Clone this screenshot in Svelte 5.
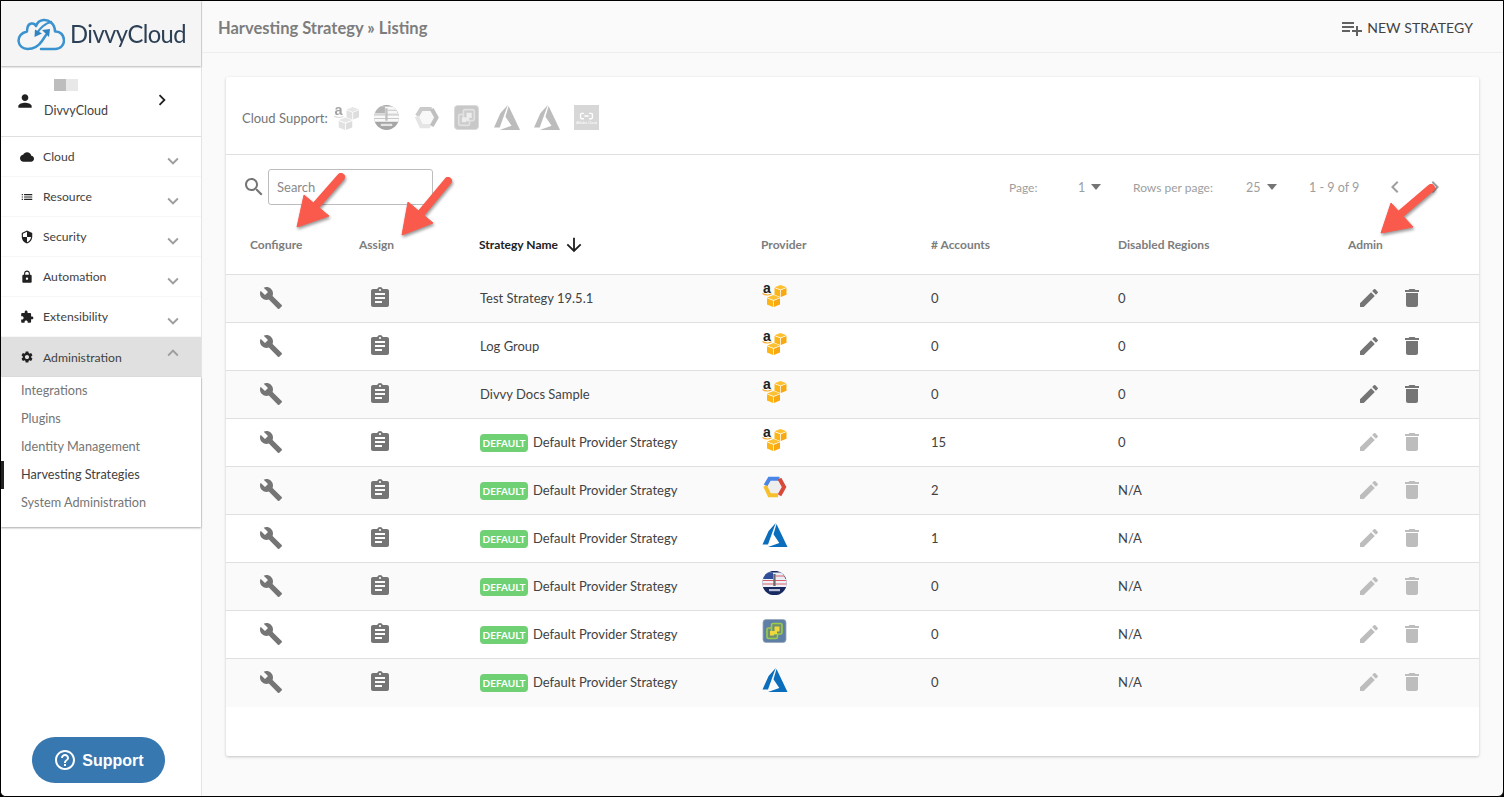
<script>
  const nav = [
    { label: 'Cloud', icon: 'M19.35 10.04C18.67 6.59 15.64 4 12 4 9.11 4 6.6 5.64 5.35 8.04 2.34 8.36 0 10.91 0 14c0 3.31 2.69 6 6 6h13c2.76 0 5-2.24 5-5 0-2.64-2.05-4.78-4.65-4.96z' },
    { label: 'Resource', icon: 'M3 13h2v-2H3v2zm0 4h2v-2H3v2zm0-8h2V7H3v2zm4 4h14v-2H7v2zm0 4h14v-2H7v2zM7 7v2h14V7H7z' },
    { label: 'Security', icon: 'M12 1L3 5v6c0 5.55 3.84 10.74 9 12 5.16-1.26 9-6.45 9-12V5l-9-4zm0 10.99h7c-.53 4.12-3.28 7.79-7 8.94V12H5V6.3l7-3.11v8.8z' },
    { label: 'Automation', icon: 'M18 8h-1V6c0-2.76-2.24-5-5-5S7 3.24 7 6v2H6c-1.1 0-2 .9-2 2v10c0 1.1.9 2 2 2h12c1.1 0 2-.9 2-2V10c0-1.1-.9-2-2-2zm-6 9c-1.1 0-2-.9-2-2s.9-2 2-2 2 .9 2 2-.9 2-2 2zm3.1-9H8.9V6c0-1.71 1.39-3.1 3.1-3.1 1.71 0 3.1 1.39 3.1 3.1v2z' },
    { label: 'Extensibility', icon: 'M20.5 11H19V7c0-1.1-.9-2-2-2h-4V3.5C13 2.12 11.88 1 10.5 1S8 2.12 8 3.5V5H4c-1.1 0-1.99.9-1.99 2v3.8H3.5c1.49 0 2.7 1.21 2.7 2.7s-1.21 2.7-2.7 2.7H2V20c0 1.1.9 2 2 2h3.8v-1.5c0-1.49 1.21-2.7 2.7-2.7 1.49 0 2.7 1.21 2.7 2.7V22H17c1.1 0 2-.9 2-2v-4h1.5c1.38 0 2.5-1.12 2.5-2.5S21.88 11 20.5 11z' },
  ];
  const settings = 'M19.14 12.94c.04-.3.06-.61.06-.94 0-.32-.02-.64-.07-.94l2.03-1.58c.18-.14.23-.41.12-.61l-1.92-3.32c-.12-.22-.37-.29-.59-.22l-2.39.96c-.5-.38-1.03-.7-1.62-.94l-.36-2.54c-.04-.24-.24-.41-.48-.41h-3.84c-.24 0-.43.17-.47.41l-.36 2.54c-.59.24-1.13.57-1.62.94l-2.39-.96c-.22-.08-.47 0-.59.22L2.74 8.87c-.12.21-.08.47.12.61l2.03 1.58c-.05.3-.09.63-.09.94s.02.64.07.94l-2.03 1.58c-.18.14-.23.41-.12.61l1.92 3.32c.12.22.37.29.59.22l2.39-.96c.5.38 1.03.7 1.62.94l.36 2.54c.05.24.24.41.48.41h3.84c.24 0 .44-.17.47-.41l.36-2.54c.59-.24 1.13-.56 1.62-.94l2.39.96c.22.08.47 0 .59-.22l1.92-3.32c.12-.22.07-.47-.12-.61l-2.01-1.58zM12 15.6c-1.98 0-3.6-1.62-3.6-3.6s1.62-3.6 3.6-3.6 3.6 1.62 3.6 3.6-1.62 3.6-3.6 3.6z';
  const subs = ['Integrations', 'Plugins', 'Identity Management', 'Harvesting Strategies', 'System Administration'];
  const cols = ['Configure', 'Assign', 'Strategy Name', 'Provider', '# Accounts', 'Disabled Regions', 'Admin'];
  const rows = [
    { name: 'Test Strategy 19.5.1', p: 'aws', acc: '0', dis: '0' },
    { name: 'Log Group', p: 'aws', acc: '0', dis: '0' },
    { name: 'Divvy Docs Sample', p: 'aws', acc: '0', dis: '0' },
    { name: 'Default Provider Strategy', d: true, p: 'aws', acc: '15', dis: '0' },
    { name: 'Default Provider Strategy', d: true, p: 'gcp', acc: '2', dis: 'N/A' },
    { name: 'Default Provider Strategy', d: true, p: 'azure', acc: '1', dis: 'N/A' },
    { name: 'Default Provider Strategy', d: true, p: 'gov', acc: '0', dis: 'N/A' },
    { name: 'Default Provider Strategy', d: true, p: 'vmw', acc: '0', dis: 'N/A' },
    { name: 'Default Provider Strategy', d: true, p: 'azure', acc: '0', dis: 'N/A' },
  ];
  const support = ['aws', 'gov', 'gcp', 'vmw', 'azure', 'azure', 'ali'];
  const arrows = [
    { tip: '297,227 304,195 329,216', line: [341, 177, 312, 210] },
    { tip: '402,235 408,202 433,223', line: [448, 181, 418, 217] },
    { tip: '1381,233 1391,203 1413,227', line: [1431, 188, 1397, 217] },
  ];
</script>

{#snippet mi(d, cls)}
  <svg class={cls} viewBox="0 0 24 24" aria-hidden="true"><path {d} /></svg>
{/snippet}

{#snippet logo(p)}
  {#if p === 'aws'}
    <svg class="prov" viewBox="0 0 24 24" aria-hidden="true">
      <text x="0.500" y="9.500" class="awsa">a</text>
      <path d="M0 10.500q4.500 2.800 9 .2" fill="none" stroke="#f5a623" stroke-width="1.100" />
      <path d="M12 4.300 18 2 24 4.300 18 6.600z" fill="#fdc02f" />
      <path d="M12 5 17.600 7.300V14L12 11.700z" fill="#fdb515" />
      <path d="M24 5 18.400 7.300V14L24 11.700z" fill="#f9a90f" />
      <path d="M4.500 14.500 11 12 17.500 14.500 11 17z" fill="#fdc02f" />
      <path d="M4.500 15.300 10.600 17.800V24L4.500 21.500z" fill="#fdb515" />
      <path d="M17.500 15.300 11.400 17.800V24L17.500 21.500z" fill="#f9a90f" />
    </svg>
  {:else if p === 'gcp'}
    <svg class="prov" viewBox="0 0 24 24" aria-hidden="true">
      <path d="M7 3h10l5 9-5 9H7l-5-9z" fill="#eeeeee" />
      <path d="M3 10.500 7 3.800h10" fill="none" stroke="#4a86e8" stroke-width="4" />
      <path d="M2.600 11 7 20.200h8.500" fill="none" stroke="#f6c02c" stroke-width="4" />
      <path d="M17 3.800 21.600 12 17 20.200" fill="none" stroke="#d9493a" stroke-width="4" />
    </svg>
  {:else if p === 'azure'}
    <svg class="prov" viewBox="0 0 24 24" aria-hidden="true">
      <path fill="#0a6ebd" d="M5.483 24H25L14.025 1l-3.038 10.300 5.836 8.700L5.483 24zM13.230 0 6.105 8 0 21.500h5.505z" />
    </svg>
  {:else if p === 'gov'}
    <svg class="prov round" viewBox="0 0 24 24" aria-hidden="true">
      <rect width="24" height="24" fill="#18295f" />
      <path d="M0 8h24v8H0z" fill="#eef1f7" />
      <path d="M4 1.500h16l3 6.500H1z" fill="#e9edf5" />
      <path d="M13 5h10M0 9.500h24M0 13h24" stroke="#d9606a" stroke-width="1.100" />
      <path d="M3 1.500h7.500V8H1z" fill="#2f4d99" />
      <path d="M10.800 3h2.300v12h-2.300z" fill="#6a6a6a" />
      <rect x="6.500" y="18" width="11" height="2.200" fill="#b8c0d6" />
    </svg>
  {:else if p === 'vmw'}
    <svg class="prov" viewBox="0 0 24 24" aria-hidden="true">
      <rect x=".5" y=".5" width="23" height="23" rx="3" fill="#5f7fa6" stroke="#9aa7b8" stroke-width=".8" />
      <rect x="4.500" y="9" width="10.500" height="10.500" rx="1.500" fill="#6f8f70" stroke="#9ccb4c" stroke-width="1.600" />
      <rect x="9" y="4.500" width="10.500" height="10.500" rx="1.500" fill="#6f8f70" stroke="#9ccb4c" stroke-width="1.600" />
      <path d="M12 7.500h5v5h-2.500V15H9v-3h3z" fill="#f1d83c" />
      <rect x="7.500" y="12" width="4" height="4.500" fill="#f1d83c" />
    </svg>
  {:else}
    <svg class="prov" viewBox="0 0 24 24" aria-hidden="true">
      <rect width="24" height="24" fill="#a0a0a0" />
      <path d="M9.500 8H7.500a1.200 1.200 0 0 0-1.200 1.200V12a1.200 1.200 0 0 0 1.200 1.200h2M14.500 8h2a1.200 1.200 0 0 1 1.200 1.200V12a1.200 1.200 0 0 1-1.200 1.200h-2M10 10.600h4" fill="none" stroke="#fff" stroke-width="1.300" />
      <text x="12" y="18.500" class="alit">Alibaba Cloud</text>
    </svg>
  {/if}
{/snippet}

<div class="frame">
  <aside class="side">
    <div class="brand">
      <svg class="cloudmark" viewBox="0 0 48 36" aria-hidden="true">
        <path d="M24 33H38C44 33 47 28.500 47 24.500 47 19 43 15 38 15.500 38 8 32 3.500 26.500 4 22.500 4.500 20 7 19 10 17 6 11.500 7 10.500 11.500 10 14 10 15 10 15.500 4 17 1.500 21 1.500 25 2 30 6 33 10.500 33 18 33 23 28 25 25L29 19" fill="none" stroke="#3a92cf" stroke-width="2.500" stroke-linecap="round" stroke-linejoin="round" />
        <path d="M34 6C28 7.500 24 11 20 17" fill="none" stroke="#3a92cf" stroke-width="2.300" stroke-linecap="round" />
        <path d="M25 14 33 13 32 21z" fill="#2f83c0" />
        <path d="M17.500 21 18 13.500 25 17.500z" fill="#2f83c0" />
      </svg>
      <span class="brandname">DivvyCloud</span>
    </div>

    <div class="user">
      {@render mi('M12 12c2.210 0 4-1.790 4-4s-1.790-4-4-4-4 1.790-4 4 1.790 4 4 4zm0 2c-2.670 0-8 1.340-8 4v2h16v-2c0-2.660-5.330-4-8-4z', 'personicon')}
      <div class="userinfo">
        <div class="blur"><i></i><b></b></div>
        <div class="uname">DivvyCloud</div>
      </div>
      {@render mi('M10 6 8.590 7.410 13.170 12l-4.580 4.590L10 18l6-6z', 'userchev')}
    </div>

    <nav>
      {#each nav as n}
        <div class="nitem">
          {@render mi(n.icon, 'nicon')}
          <span class="nlabel">{n.label}</span>
          {@render mi('M16.590 8.590 12 13.170 7.410 8.590 6 10l6 6 6-6z', 'nchev')}
        </div>
      {/each}
      <div class="nitem open">
        {@render mi(settings, 'nicon')}
        <span class="nlabel">Administration</span>
        {@render mi('M12 8l-6 6 1.410 1.410L12 10.830l4.590 4.580L18 14z', 'nchev up')}
      </div>
      <ul class="subs">
        {#each subs as s, i}
          <li class:active={i === 3}>{s}</li>
        {/each}
      </ul>
    </nav>

    <div class="support">
      <svg viewBox="0 0 24 24" aria-hidden="true"><path fill="#fff" d="M11 18h2v-2h-2v2zm1-16C6.480 2 2 6.480 2 12s4.480 10 10 10 10-4.480 10-10S17.520 2 12 2zm0 18c-4.410 0-8-3.590-8-8s3.590-8 8-8 8 3.590 8 8-3.590 8-8 8zm0-14c-2.210 0-4 1.790-4 4h2c0-1.100.9-2 2-2s2 .9 2 2c0 2-3 1.750-3 5h2c0-2.250 3-2.500 3-5 0-2.210-1.790-4-4-4z" /></svg>
      <span>Support</span>
    </div>
  </aside>

  <main class="main">
    <header class="top">
      <h1>Harvesting Strategy » Listing</h1>
      <div class="newbtn">
        {@render mi('M14 10H2v2h12v-2zm0-4H2v2h12V6zm4 8v-4h-2v4h-4v2h4v4h2v-4h4v-2h-4zM2 16h8v-2H2v2z', 'addicon')}
        <span>NEW STRATEGY</span>
      </div>
    </header>

    <section class="card">
      <div class="cloudsupport">
        <span class="cslabel">Cloud Support:</span>
        <div class="csicons">
          {#each support as s}
            <span class="csi">{@render logo(s)}</span>
          {/each}
        </div>
      </div>

      <div class="toolbar">
        <div class="searchwrap">
          {@render mi('M15.500 14h-.79l-.28-.27C15.410 12.590 16 11.110 16 9.500 16 5.910 13.090 3 9.500 3S3 5.910 3 9.500 5.910 16 9.500 16c1.610 0 3.090-.59 4.230-1.570l.27.28v.79l5 4.990L20.490 19l-4.990-5zm-6 0C7.010 14 5 11.990 5 9.500S7.010 5 9.500 5 14 7.010 14 9.500 11.990 14 9.500 14z', 'searchicon')}
          <input class="search" placeholder="Search" />
        </div>
        <div class="pager">
          <span class="plabel p1">Page:</span>
          <span class="pval v1">1</span><i class="caret"></i>
          <span class="plabel p2">Rows per page:</span>
          <span class="pval v2">25</span><i class="caret"></i>
          <span class="prange">1 - 9 of 9</span>
          {@render mi('M15.410 7.410 14 6l-6 6 6 6 1.410-1.410L10.830 12z', 'pgchev prev')}
          {@render mi('M10 6 8.590 7.410 13.170 12l-4.580 4.590L10 18l6-6z', 'pgchev')}
        </div>
      </div>

      <div class="table">
        <div class="tr thead">
          {#each cols as c, i}
            <div class="th" class:sorted={i === 2}>
              {c}
              {#if i === 2}
                {@render mi('M20 12l-1.410-1.410L13 16.170V4h-2v12.170l-5.580-5.590L4 12l8 8 8-8z', 'sort')}
              {/if}
            </div>
          {/each}
        </div>
        {#each rows as r}
          <div class="tr row">
            <div class="td">{@render mi('M22.700 19l-9.100-9.100c.9-2.300.4-5-1.500-6.900-2-2-5-2.400-7.400-1.300L9 6 6 9 1.600 4.700C.4 7.100.9 10.100 2.900 12.100c1.900 1.900 4.600 2.400 6.900 1.500l9.100 9.100c.4.4 1 .4 1.400 0l2.300-2.300c.5-.4.5-1.100.1-1.400z', 'act')}</div>
            <div class="td">{@render mi('M19 3h-4.180C14.400 1.840 13.300 1 12 1c-1.300 0-2.400.84-2.820 2H5c-1.100 0-2 .9-2 2v14c0 1.100.9 2 2 2h14c1.100 0 2-.9 2-2V5c0-1.100-.9-2-2-2zm-7 0c.55 0 1 .45 1 1s-.45 1-1 1-1-.45-1-1 .45-1 1-1zm2 14H7v-2h7v2zm3-4H7v-2h10v2zm0-4H7V7h10v2z', 'act')}</div>
            <div class="td name">
              {#if r.d}<span class="badge">DEFAULT</span>{/if}
              <span>{r.name}</span>
            </div>
            <div class="td provcell">{@render logo(r.p)}</div>
            <div class="td">{r.acc}</div>
            <div class="td">{r.dis}</div>
            <div class="td admin" class:muted={r.d}>
              {@render mi('M3 17.250V21h3.750L17.810 9.940l-3.750-3.750L3 17.250zM20.710 7.040c.39-.39.39-1.020 0-1.410l-2.340-2.340c-.39-.39-1.020-.39-1.410 0l-1.830 1.830 3.750 3.750 1.830-1.830z', 'act')}
              {@render mi('M6 19c0 1.100.9 2 2 2h8c1.100 0 2-.9 2-2V7H6v12zM19 4h-3.500l-1-1h-5l-1 1H5v2h14V4z', 'act')}
            </div>
          </div>
        {/each}
      </div>
    </section>
  </main>

  <svg class="notes" viewBox="0 0 1504 797" aria-hidden="true">
    {#each arrows as a}
      <g class="arrow">
        <line x1={a.line[0]} y1={a.line[1]} x2={a.line[2]} y2={a.line[3]} />
        <polygon points={a.tip} />
      </g>
    {/each}
  </svg>
</div>

<style>
  :global(body) { margin: 0; background: #000; }
  .frame {
    position: relative;
    width: 1504px;
    height: 797px;
    box-sizing: border-box;
    border: 1px solid #000;
    border-radius: 0 0 6px 6px;
    overflow: hidden;
    display: flex;
    background: #fafafa;
    font-family: Lato, "Liberation Sans", sans-serif;
    color: #424242;
  }
  svg { display: block; fill: currentColor; flex: none; }
  .frame :global(svg.prov) { overflow: visible; }
  .frame :global(svg.prov.round) { overflow: hidden; clip-path: circle(50%); }

  .side {
    width: 201px;
    flex: none;
    box-sizing: border-box;
    border-right: 1px solid #e4e4e4;
    background: #fff;
    display: flex;
    flex-direction: column;
  }
  .brand {
    height: 65px;
    flex: none;
    background: #f5f5f5;
    box-shadow: 0 1px 2px rgba(0,0,0,.3);
    display: flex;
    align-items: center;
    padding-left: 16px;
    gap: 5px;
    box-sizing: border-box;
    position: relative;
  }
  .cloudmark { width: 48px; height: 36px; }
  .brandname { font-size: 25px; color: #2d4156; letter-spacing: -.6px; line-height: 1; transform: scaleX(.95); transform-origin: left; }

  .user {
    height: 70px;
    margin-top: 1px;
    flex: none;
    box-sizing: border-box;
    border-bottom: 1px solid #e0e0e0;
    display: flex;
    align-items: center;
    padding-left: 14px;
    color: #212121;
  }
  .user :global(.personicon) { width: 20px; height: 20px; margin-top: -1px; }
  .userinfo { margin-left: 9px; width: 105px; }
  .blur { display: flex; margin-left: 10px; height: 12px; margin-top: -5px; margin-bottom: 9px; }
  .blur i { width: 12px; background: #bdbdbd; }
  .blur b { width: 12px; background: #e8e8e8; }
  .uname { font-size: 12.500px; line-height: 16px; color: #424242; padding-top: 3px; }
  .user :global(.userchev) { width: 22px; height: 22px; margin-left: 2px; margin-top: -3px; }

  .nitem {
    height: 40px;
    box-sizing: border-box;
    border-bottom: 1px solid #f7f7f7;
    display: flex;
    align-items: center;
    padding-left: 19px;
    color: #212121;
  }
  .nitem.open { background: #e0e0e0; border-bottom: 0; }
  .nitem :global(.nicon) { width: 14px; height: 14px; }
  .nlabel { margin-left: 9px; font-size: 12.200px; color: #424242; flex: 1; }
  .nitem :global(.nchev) { width: 22px; height: 22px; margin-right: 17px; margin-top: 8px; color: #9e9e9e; }
  .nitem :global(.nchev.up) { margin-top: -8px; }

  .subs {
    list-style: none;
    margin: 0;
    padding: 0 0 10px;
    box-shadow: 0 1px 2px rgba(0,0,0,.35);
  }
  .subs li {
    height: 28px;
    line-height: 26px;
    font-size: 12.700px;
    color: #757575;
    padding-left: 20px;
    position: relative;
  }
  .subs li.active { color: #424242; box-shadow: inset 3px 0 0 #212121; }

  .support {
    margin: auto 0 13px 31px;
    width: 133px;
    height: 46px;
    border-radius: 23px;
    background: #3878b0;
    display: flex;
    align-items: center;
    justify-content: center;
    gap: 5px;
    color: #fff;
    font-family: "Liberation Sans", Arial, sans-serif;
    font-weight: 700;
    font-size: 16px;
  }
  .support span { padding-top: 2px; }
  .support svg { width: 24px; height: 24px; }

  .main { flex: 1; min-width: 0; display: flex; flex-direction: column; }
  .top {
    height: 52px;
    flex: none;
    box-sizing: border-box;
    border-bottom: 1px solid #eeeeee;
    display: flex;
    align-items: center;
    justify-content: space-between;
    padding: 0 30px 0 16px;
  }
  h1 { margin: 0; padding-top: 2px; font-size: 16.500px; font-weight: 700; color: #7d7d7d; }
  .newbtn { display: flex; align-items: center; font-size: 14px; color: #424242; gap: 3px; letter-spacing: .1px; }
  .newbtn span { padding-top: 2px; }
  .newbtn :global(.addicon) { width: 24px; height: 24px; color: #616161; margin-top: 2px; }

  .card {
    margin: 24px 24px 0;
    height: 679px;
    background: #fff;
    border-radius: 2px;
    box-shadow: 0 1px 3px rgba(0,0,0,.22);
    display: flex;
    flex-direction: column;
  }
  .cloudsupport {
    height: 78px;
    flex: none;
    box-sizing: border-box;
    border-bottom: 1px solid #e0e0e0;
    display: flex;
    align-items: center;
    padding: 4px 0 0 16px;
  }
  .cslabel { font-size: 13px; color: #757575; width: 92px; }
  .csicons { display: flex; gap: 15px; }
  .csi { display: block; filter: grayscale(1) opacity(.42); }
  .csi :global(.prov) { width: 25px; height: 25px; }

  .toolbar {
    height: 70px;
    flex: none;
    display: flex;
    justify-content: space-between;
    padding: 14px 0 0 16px;
    box-sizing: border-box;
  }
  .searchwrap { display: flex; align-items: center; height: 36px; }
  .searchwrap :global(.searchicon) { width: 24px; height: 24px; margin-right: 2px; color: #757575; }
  .search {
    width: 165px;
    height: 36px;
    box-sizing: border-box;
    border: 1px solid #bdbdbd;
    border-radius: 3px;
    padding: 0 8px;
    font: 13px Lato, sans-serif;
    outline: none;
    background: #fff;
  }
  .search::placeholder { color: #8a8a8a; opacity: 1; }
  .pager {
    display: flex;
    align-items: center;
    height: 36px;
    font-size: 12px;
    color: #9e9e9e;
    position: relative;
    padding-right: 32px;
  }
  .p1 { width: 69px; }
  .v1 { width: 13px; font-size: 12.500px; }
  .caret { width: 0; height: 0; border: 5.500px solid transparent; border-top: 6px solid #757575; border-bottom: 0; }
  .p2 { width: 113px; margin-left: 32px; }
  .v2 { width: 20.500px; font-size: 12.500px; }
  .prange { margin-left: 32.500px; width: 74px; font-size: 12.500px; }
  .pager :global(.pgchev) { width: 24px; height: 24px; color: #9e9e9e; }
  .pager :global(.pgchev.prev) { margin-right: 16px; }

  .table { display: flex; flex-direction: column; }
  .tr {
    display: grid;
    grid-template-columns: 109px 120px 282px 170px 187px 230px 1fr;
    padding-left: 24px;
    align-items: center;
    box-sizing: border-box;
  }
  .thead { height: 50px; border-bottom: 1px solid #e0e0e0; padding-bottom: 11px; }
  .th { font-size: 12px; font-weight: 700; color: #7d7d7d; }
  .th.sorted { display: flex; align-items: center; gap: 5px; color: #212121; }
  .th.sorted :global(.sort) { width: 22px; height: 22px; color: #212121; margin-top: 1px; }
  .row { height: 48px; border-bottom: 1px solid #e0e0e0; font-size: 13px; color: #424242; padding-bottom: 2px; }
  .row:nth-child(even) { background: #fafafa; }
  .row:last-child { border-bottom: 0; }
  .td :global(.act) { width: 24px; height: 24px; color: #757575; margin-left: 9px; }
  .name { display: flex; align-items: center; gap: 5px; padding-left: 1px; }
  .badge {
    width: 48px;
    height: 18px;
    border-radius: 4px;
    background: #6fd074;
    color: #fff;
    font-size: 10px;
    font-weight: 700;
    line-height: 19px;
    text-align: center;
    margin-top: 2px;
  }
  .provcell :global(.prov) { width: 25px; height: 24px; margin-top: -5px; margin-left: 1px; }
  .admin { display: flex; gap: 19px; }
  .admin :global(.act + .act) { margin-left: 0; }
  .admin.muted :global(.act) { color: #bdbdbd; }

  .awsa { font: 700 14px "Liberation Sans", sans-serif; fill: #212121; }
  .alit { font: 3.200px "Liberation Sans", sans-serif; fill: #fff; text-anchor: middle; }

  .notes { position: absolute; left: -1px; top: -1px; width: 1504px; height: 797px; pointer-events: none; }
  .arrow { filter: drop-shadow(1px 2px 1.500px rgba(0,0,0,.4)); }
  .arrow line { stroke: #fa5a4c; stroke-width: 8; stroke-linecap: round; }
  .arrow polygon { fill: #fa5a4c; stroke: #fa5a4c; stroke-width: 1; stroke-linejoin: round; }
</style>
